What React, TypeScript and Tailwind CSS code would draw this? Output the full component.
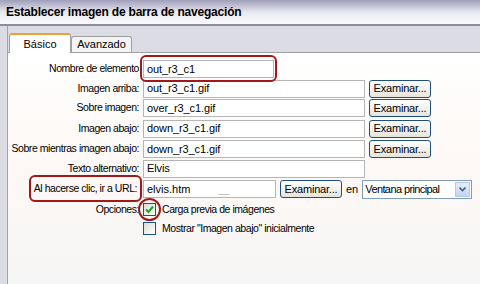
import React from "react";

const font = { fontFamily: "'Liberation Sans', Arial, sans-serif" };

function Input({ w, value }: { w: string; value: string }) {
  return (
    <div className={`${w} h-[18px] border border-[#b5b5b5] bg-white flex items-center pl-[3px] text-[11px] text-black tracking-[-0.1px]`}>
      {value}
    </div>
  );
}

function Btn() {
  return (
    <div className="w-[62px] h-[18px] rounded-[3px] border border-[#1f4f80] bg-gradient-to-b from-white to-[#e6e4dc] flex items-center justify-center text-[11px] text-black whitespace-nowrap tracking-[-0.2px]">
      Examinar...
    </div>
  );
}

function Row({ label, children, h }: { label: string; children: React.ReactNode; h: string }) {
  return (
    <div className={`flex items-center ${h}`}>
      <div className="w-[135px] text-right text-[10.5px] text-black pr-[4px] whitespace-nowrap tracking-[-0.45px]">{label}</div>
      <div className="flex items-center gap-[4px]">{children}</div>
    </div>
  );
}

function Check({ checked }: { checked?: boolean }) {
  return (
    <div className="w-[13px] h-[13px] border border-[#1c5180] bg-gradient-to-br from-[#dcdcd6] to-white flex items-center justify-center">
      {checked && (
        <svg width="9" height="9" viewBox="0 0 9 9">
          <path d="M1 4.5 L3.5 7 L8 1.5" stroke="#21a121" strokeWidth="2" fill="none" />
        </svg>
      )}
    </div>
  );
}

export default function App() {
  return (
    <div className="w-[480px] h-[284px] overflow-hidden bg-[#f5f5f5] flex flex-col" style={font}>
      <div className="h-[26px] shrink-0 bg-gradient-to-b from-[#9e9eba] via-[#e8e8f0] to-[#fafafe] border-b-2 border-[#8c8c9c] flex items-center pl-[6px]">
        <span className="text-[12px] font-bold text-black tracking-[-0.2px]">Establecer imagen de barra de navegación</span>
      </div>
      <div className="flex-1 flex">
        <div className="w-[8px] shrink-0 bg-[#dcdce4] border-r border-[#a0a0b0]" />
        <div className="flex-1 flex flex-col bg-[#dcdce4]">
          <div className="h-[27px] shrink-0 flex items-end pl-[1px] border-b border-[#a0a0a0]">
            <div className="w-[62px] h-[20px] bg-white border border-b-0 border-[#a0a0a0] border-t-2 border-t-[#f0a030] rounded-t-[3px] flex items-center justify-center text-[11px] text-black -mb-px">
              Básico
            </div>
            <div className="w-[61px] h-[16px] bg-[#f4f4f4] border border-b-0 border-[#a0a0a0] rounded-t-[3px] flex items-center justify-center text-[11px] text-black">
              Avanzado
            </div>
          </div>
          <div className="flex-1 bg-gradient-to-b from-white via-[#fdf8f5] to-[#f6f6f6] pt-[6px] flex flex-col">
            <Row label="Nombre de elemento" h="h-[20px]">
              <div className="relative">
                <Input w="w-[131px]" value="out_r3_c1" />
                <div className="absolute -left-[3px] -top-[5px] w-[137px] h-[27px] border-2 border-[#a01818] rounded-[6px]" />
              </div>
            </Row>
            <Row label="Imagen arriba:" h="h-[19px]">
              <Input w="w-[222px]" value="out_r3_c1.gif" />
              <Btn />
            </Row>
            <Row label="Sobre imagen:" h="h-[20px]">
              <Input w="w-[222px]" value="over_r3_c1.gif" />
              <Btn />
            </Row>
            <Row label="Imagen abajo:" h="h-[21px]">
              <Input w="w-[222px]" value="down_r3_c1.gif" />
              <Btn />
            </Row>
            <Row label="Sobre mientras imagen abajo:" h="h-[20px]">
              <Input w="w-[222px]" value="down_r3_c1.gif" />
              <Btn />
            </Row>
            <Row label="Texto alternativo:" h="h-[19px]">
              <Input w="w-[222px]" value="Elvis" />
            </Row>
            <div className="flex items-center h-[20px] mt-px">
              <div className="w-[135px] flex justify-end pr-[6px]">
                <div className="relative text-[10.5px] text-black whitespace-nowrap tracking-[-0.45px]">
                  Al hacerse clic, ir a URL:
                  <div className="absolute -left-[5px] -right-[5px] -top-[6px] -bottom-[5px] border-2 border-[#a01818] rounded-[6px]" />
                </div>
              </div>
              <div className="flex items-center gap-[4px]">
                <div className="w-[133px] h-[18px] border border-[#b5b5b5] bg-white flex items-center pl-[3px] text-[11px] text-black">
                  elvis.htm
                  <span className="ml-[28px] mt-[10px] w-[12px] h-px bg-[#c8c8c8]" />
                </div>
                <Btn />
                <span className="text-[11px] text-black">en</span>
                <div className="w-[110px] h-[19px] border border-[#7f9db9] bg-white flex items-center">
                  <span className="flex-1 pl-[2px] text-[11px] text-black whitespace-nowrap tracking-[-0.6px]">Ventana principal</span>
                  <div className="w-[15px] h-[15px] mr-px border border-[#b4c8f0] bg-gradient-to-b from-[#e6eefc] to-[#c4d4f4] flex items-center justify-center">
                    <svg width="7" height="5" viewBox="0 0 7 5">
                      <path d="M0.5 0.5 L3.5 3.5 L6.5 0.5" stroke="#4d6185" strokeWidth="1.6" fill="none" />
                    </svg>
                  </div>
                </div>
              </div>
            </div>
            <div className="flex items-center h-[21px]">
              <div className="w-[135px] text-right text-[10.5px] text-black pr-[4px] tracking-[-0.45px]">Opciones:</div>
              <div className="relative">
                <Check checked />
                <div className="absolute -left-[5px] -top-[5px] w-[23px] h-[23px] border-2 border-[#a01818] rounded-full" />
              </div>
              <span className="ml-[6px] text-[10.5px] text-black tracking-[-0.45px]">Carga previa de imágenes</span>
            </div>
            <div className="flex items-center h-[17px]">
              <div className="w-[135px]" />
              <Check />
              <span className="ml-[6px] text-[10.5px] text-black tracking-[-0.45px]">Mostrar "Imagen abajo" inicialmente</span>
            </div>
          </div>
        </div>
      </div>
    </div>
  );
}
